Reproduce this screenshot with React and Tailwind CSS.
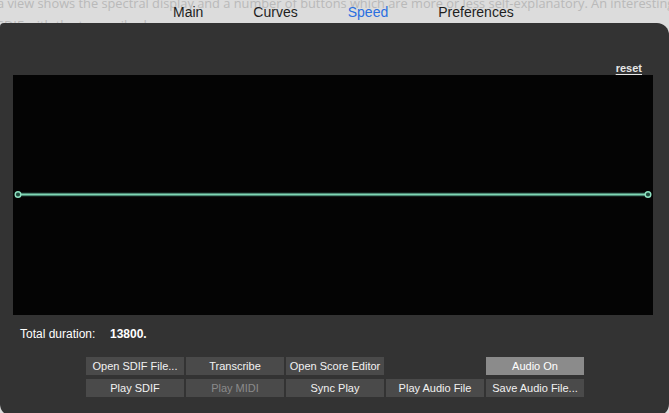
const row1 = [
  { label: 'Open SDIF File...' },
  { label: 'Transcribe' },
  { label: 'Open Score Editor' },
  null,
  { label: 'Audio On', active: true },
];

const row2 = [
  { label: 'Play SDIF' },
  { label: 'Play MIDI', disabled: true },
  { label: 'Sync Play' },
  { label: 'Play Audio File' },
  { label: 'Save Audio File...' },
];

function PanelButton({ item }) {
  if (!item) return <div className="h-[18px] w-[98px]" />;
  return (
    <button
      className={`flex h-[18px] w-[98px] items-center justify-center text-[11px] leading-none ${
        item.active ? 'bg-[#8b8b8b] text-white' : 'bg-[#4a4a4a]'
      } ${item.disabled ? 'text-[#8a8a8a]' : 'text-[#f2f2f2]'}`}
    >
      {item.label}
    </button>
  );
}

function SpeedCurve() {
  return (
    <svg width="640" height="240" className="block">
      <line x1="5" y1="119.5" x2="635" y2="119.5" stroke="#1d3a32" strokeWidth="4" />
      <line x1="5" y1="119.5" x2="635" y2="119.5" stroke="#7ed6b4" strokeWidth="2" />
      <circle cx="5" cy="119.5" r="2.8" fill="#1f4a3d" stroke="#8fe2c2" strokeWidth="1.4" />
      <circle cx="635" cy="119.5" r="2.8" fill="#1f4a3d" stroke="#8fe2c2" strokeWidth="1.4" />
    </svg>
  );
}

export default function App() {
  const tabs = ['Main', 'Curves', 'Speed', 'Preferences'];

  return (
    <div className="relative h-[413px] w-[669px] overflow-hidden bg-[#dcdcdc] font-['Liberation_Sans',Arial,sans-serif]">
      <div className="absolute left-[-3px] top-[-8px] whitespace-nowrap font-['Open_Sans',sans-serif] text-[12.8px] leading-[22px] text-[#b9b9b9]">
        <p>a view shows the spectral display and a number of buttons which are more or less self-explanatory. An interesting</p>
        <p>SDIF with the transcribed score.</p>
      </div>

      <nav className="relative flex h-[23px] items-center gap-[50px] pl-[173px] pt-[2px] text-[14px] text-[#1e1e1e]">
        {tabs.map((tab) => (
          <span key={tab} className={tab === 'Speed' ? 'text-[#2a6fe0]' : ''}>
            {tab}
          </span>
        ))}
      </nav>

      <section className="relative h-[393px] rounded-tl-[4px] rounded-tr-[12px] rounded-b-[12px] bg-[#333333] pt-[39px]">
        <div className="flex justify-end pr-[27px]">
          <span className="text-[11px] font-bold leading-[13px] text-[#e6e6e6] underline underline-offset-2">reset</span>
        </div>

        <div className="ml-[13px] h-[240px] w-[640px] bg-[#040404]">
          <SpeedCurve />
        </div>

        <div className="mt-[12px] flex pl-[20px] text-[12px] leading-[14px] text-white">
          <span className="w-[90px]">Total duration:</span>
          <span className="font-bold">13800.</span>
        </div>

        <div className="mt-[16px] flex flex-col gap-[4px] pl-[86px]">
          <div className="flex gap-[2px]">
            {row1.map((item, i) => (
              <PanelButton key={i} item={item} />
            ))}
          </div>
          <div className="flex gap-[2px]">
            {row2.map((item, i) => (
              <PanelButton key={i} item={item} />
            ))}
          </div>
        </div>
      </section>
    </div>
  );
}
